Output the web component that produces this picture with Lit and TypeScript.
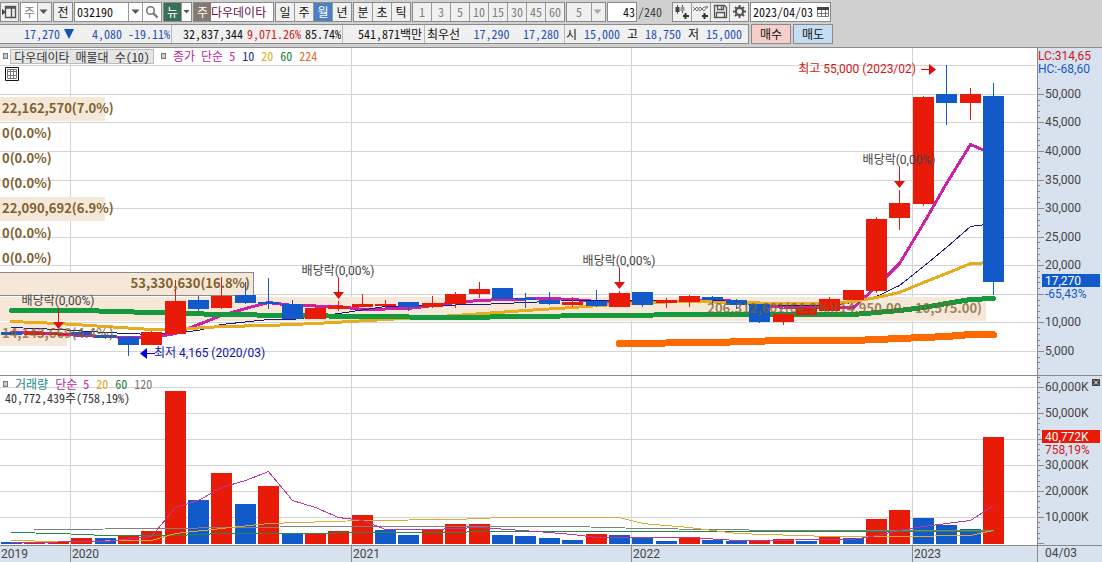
import { LitElement, html, svg, css } from "lit";
import { customElement, state } from "lit/decorators.js";
import { classMap } from "lit/directives/class-map.js";

const arrowDown = html`<svg class="arrow" width="9" height="6" viewBox="0 0 9 6" aria-hidden="true"><path d="M0.5 0.5h8l-4 4.5z" fill="currentColor" /></svg>`;

const fontRules = css`
  :host {
    font-family: "Noto Sans Mono CJK KR", "Noto Sans CJK KR", sans-serif;
    font-size: 12px;
    line-height: 16px;
  }
  button,
  input,
  select {
    font: inherit;
    color: inherit;
    margin: 0;
    padding: 0;
    border: 0;
    border-radius: 0;
    background: none;
    box-sizing: border-box;
    min-width: 0;
    outline-offset: -1px;
  }
`;

@customElement("trade-toolbar")
class TradeToolbar extends LitElement {
  @state() private period = "월";

  static styles = [
    fontRules,
    css`
      :host {
        display: flex;
        align-items: center;
        gap: 1px;
        height: 23px;
        background: #d0d0d0;
        color: #111;
        overflow: hidden;
        white-space: nowrap;
      }
      .box {
        display: flex;
        flex: none;
        box-sizing: border-box;
        height: 20px;
        border: 1px solid #8a8a8a;
        background: #f0f0f0;
      }
      .box > * {
        flex: none;
      }
      .white {
        background: #fff;
      }
      .gray {
        color: #808080;
      }
      .btn {
        width: 19px;
        height: 18px;
        line-height: 18px;
        display: grid;
        place-items: center;
        border-right: 1px solid #9a9a9a;
      }
      .btn:last-child {
        width: 18px;
        border-right: 0;
      }
      .btn.on {
        background: #4a80c4;
        color: #fff;
      }
      .tight .btn {
        width: 17px;
      }
      .btn.narrow {
        width: 14px;
      }
      .btn.slim {
        width: 9px;
      }
      .slim .arrow {
        width: 7px;
      }
      .arrow {
        color: #555;
      }
      .btn.green {
        width: 18px;
        background: #3a7058;
        color: #fff;
      }
      .brown {
        background: #85786f;
        color: #fff;
        width: 17px;
        text-align: center;
        line-height: 18px;
      }
      .name {
        width: 62px;
        color: #6a1048;
      }
      .code {
        width: 54px;
        padding-left: 2px;
        border-right: 1px solid #9a9a9a;
      }
      .count {
        width: 28px;
        text-align: right;
        padding-right: 1px;
      }
      .date {
        width: 65px;
        padding-left: 2px;
      }
      .total {
        flex: none;
        width: 32px;
        color: #444;
      }
      .pick {
        display: grid;
        grid-template-columns: 1fr 12px;
        align-items: center;
        width: 30px;
        background: #fff;
      }
      .pick select {
        grid-area: 1 / 1 / 2 / 3;
        appearance: none;
        height: 18px;
        padding-left: 3px;
      }
      .pick .arrow {
        grid-area: 1 / 2;
        pointer-events: none;
        z-index: 1;
      }
      .pick::after {
        content: "";
        grid-area: 1 / 2;
        height: 18px;
        margin-left: -2px;
        border-left: 1px solid #9a9a9a;
        background: #f0f0f0;
        pointer-events: none;
      }
      .pick.wide {
        width: 38px;
        grid-template-columns: 1fr 12px;
        background: #f0f0f0;
      }
      .wide select {
        padding-left: 9px;
      }
      .wide .arrow {
        color: #aaa;
      }
      .tools {
        margin-left: 1px;
      }
    `,
  ];

  private periods(items: string[]) {
    return html`<div class="box">
      ${items.map(
        (p) => html`<button
          class=${classMap({ btn: true, on: this.period === p })}
          aria-pressed=${this.period === p ? "true" : "false"}
          @click=${() => (this.period = p)}
        >${p}</button>`
      )}
    </div>`;
  }

  render() {
    return html`
      <div class="box tight">
        <button class="btn" aria-label="패널 열기">
          <svg width="15" height="14" viewBox="0 0 15 14"><path d="M0 4l4 3-4 3z" fill="#444" /><path d="M3.5 1.5h10v11h-10zM3 3h11M9.5 3v9.5" fill="none" stroke="#555" stroke-width="1.4" /></svg>
        </button>
      </div>
      <div class="box">
        <div class="pick">
          <select class="gray" aria-label="종목 구분"><option>주</option></select>
          ${arrowDown}
        </div>
      </div>
      <div class="box"><button class="btn">전</button></div>
      <div class="box white">
        <input class="code" aria-label="종목 코드" value="032190" />
        <button class="btn narrow" aria-label="종목 목록">${arrowDown}</button>
        <button class="btn" aria-label="종목 찾기">
          <svg width="14" height="14" viewBox="0 0 14 14"><circle cx="5.5" cy="5.5" r="3.8" fill="#fff" stroke="#777" stroke-width="1.6" /><path d="M8.5 8.5l4 4" stroke="#777" stroke-width="2.4" /></svg>
        </button>
      </div>
      <div class="box white">
        <button class="btn green">뉴</button>
        <button class="btn slim" aria-label="뉴스 메뉴">${arrowDown}</button>
      </div>
      <div class="box white">
        <span class="brown">주</span>
        <input class="name" aria-label="종목명" value="다우데이타" />
      </div>
      ${this.periods(["일", "주", "월", "년"])} ${this.periods(["분", "초", "틱"])}
      <div class="box gray">
        ${[1, 3, 5, 10, 15, 30, 45, 60].map((n) => html`<button class="btn">${n}</button>`)}
      </div>
      <div class="box gray">
        <div class="pick wide">
          <select aria-label="분 단위"><option>5</option></select>
          ${arrowDown}
        </div>
      </div>
      <div class="box white"><input class="count" aria-label="봉 개수" value="43" /></div>
      <span class="total">/240</span>
      <div class="box tools">
        <button class="btn" aria-label="차트 유형 추가">
          <svg width="16" height="16" viewBox="0 0 16 16"><path d="M3.5 1v9M8.5 1v8" stroke="#555" /><path d="M1.5 3h4v5h-4z" fill="#444" /><path d="M6.5 3h4v4h-4z" fill="#999" /><path d="M11.5 9v6M9 12h6" stroke="#333" stroke-width="2" /></svg>
        </button>
        <button class="btn" aria-label="지표 추가">
          <svg width="16" height="16" viewBox="0 0 16 16"><path d="M0 7l4-4 3 4 4-4 4 0M0 3l4 4 3-4 4 4 4-5" fill="none" stroke="#777" /><path d="M11.5 9v6M9 12h6" stroke="#333" stroke-width="2" /></svg>
        </button>
        <button class="btn" aria-label="저장">
          <svg width="15" height="15" viewBox="0 0 15 15"><path d="M1.5 1.5h10l2 2v10h-12zM4.5 1.5v4h6v-4M3.5 13.5v-5h8v5M8.5 2.5v2" fill="none" stroke="#555" stroke-width="1.3" /></svg>
        </button>
        <button class="btn" aria-label="설정">
          <svg width="15" height="15" viewBox="0 0 15 15"><circle cx="7.5" cy="7.5" r="3.6" fill="none" stroke="#555" stroke-width="2.2" /><path d="M7.5 1v2.500M7.500 11.500V14M1 7.500h2.500M11.500 7.500H14M3 3l1.500 1.500M10.500 10.500L12 12M12 3l-1.500 1.500M4.500 10.500L3 12" stroke="#555" stroke-width="2" /></svg>
        </button>
      </div>
      <div class="box white">
        <input class="date" aria-label="기준일" value="2023/04/03" />
        <button class="btn narrow" aria-label="달력">
          <svg width="12" height="12" viewBox="0 0 12 12"><path d="M0.5 1.5h11v9h-11zM0.5 7.5h11M4.5 4v6.5M8.5 4v6.5" fill="none" stroke="#777" /><path d="M0 1h12v3H0z" fill="#444" /></svg>
        </button>
      </div>
    `;
  }
}

@customElement("quote-bar")
class QuoteBar extends LitElement {
  static styles = [
    fontRules,
    css`
      :host {
        display: flex;
        align-items: center;
        gap: 2px;
        height: 24px;
        padding-bottom: 2px;
        box-sizing: border-box;
        background: #d0d0d0;
        color: #111;
        white-space: nowrap;
      }
      .quote {
        display: flex;
        flex: none;
        width: 749px;
        height: 20px;
        box-sizing: border-box;
        border: 1px solid #8a8a8a;
        border-left: 0;
        background: #f0f0f0;
        line-height: 18px;
      }
      .cell {
        display: flex;
        justify-content: flex-end;
        gap: 4px;
        padding-right: 1px;
        box-sizing: border-box;
        border-right: 1px solid #b8b8b8;
      }
      .last {
        justify-content: space-between;
        flex: 1;
        border: 0;
        padding: 0 6px 0 1px;
      }
      .change {
        width: 172px;
        gap: 6px;
      }
      .volume {
        width: 171px;
      }
      .value {
        width: 82px;
        padding-right: 2px;
      }
      .best {
        width: 140px;
        justify-content: space-between;
        padding: 0 5px 0 2px;
      }
      .down {
        color: #1c50b8;
      }
      .up {
        color: #cc2418;
      }
      .mark {
        align-self: center;
        margin: 0 12px 0 -2px;
      }
      .order {
        width: 40px;
        height: 20px;
        border: 1px solid #8a8a8a;
        line-height: 18px;
      }
      .buy {
        background: #f6cfcb;
      }
      .sell {
        background: #c5dcf2;
      }
    `,
  ];

  render() {
    return html`
      <div class="quote">
        <div class="cell change down">
          <span>17,270</span>
          <svg class="mark" width="10" height="10" viewBox="0 0 10 10" aria-label="하락"><path d="M0 0h10L5 10z" fill="#1450c0" /></svg>
          <span>4,080</span><span>-19.11%</span>
        </div>
        <div class="cell volume"><span>32,837,344</span><span class="up">9,071.26%</span><span>85.74%</span></div>
        <div class="cell value"><span>541,871백만</span></div>
        <div class="cell best"><span>최우선</span><span class="down">17,290</span><span class="down">17,280</span></div>
        <div class="cell last">
          <span>시</span><span class="down">15,000</span><span>고</span><span class="down">18,750</span><span>저</span><span class="down">15,000</span>
        </div>
      </div>
      <button class="order buy">매수</button>
      <button class="order sell">매도</button>
    `;
  }
}

/* One price unit is 175 won and takes one pixel of height. */
const WON_PER_UNIT = 175;
/* Each candle: direction, body top, body bottom, high, low, in price units. */
type Candle = [string, number, number, number, number];
const candles: Candle[] = [
  ["d", 48, 45, 48, 45], ["u", 48, 45, 48, 45], ["u", 47, 45, 48, 45], ["d", 48, 45, 49, 43],
  ["d", 45, 42, 46, 41], ["d", 43, 35, 44, 24], ["u", 48, 35, 49, 35], ["u", 79, 46, 100, 45],
  ["d", 80, 71, 84, 67], ["u", 84, 72, 103, 71], ["d", 85, 77, 98, 76], ["d", 78, 76, 102, 71],
  ["d", 76, 61, 80, 61], ["u", 72, 61, 76, 61], ["u", 74, 71, 79, 69], ["u", 76, 73, 86, 73],
  ["u", 76, 74, 80, 73], ["d", 78, 73, 78, 69], ["u", 77, 73, 84, 72], ["u", 86, 76, 88, 72],
  ["u", 91, 86, 98, 82], ["d", 92, 81, 92, 81], ["d", 82, 80, 87, 72], ["d", 80, 76, 88, 75],
  ["u", 78, 75, 83, 73], ["d", 79, 74, 90, 73], ["u", 87, 73, 89, 73], ["d", 88, 75, 88, 73],
  ["u", 80, 77, 82, 72], ["u", 84, 78, 85, 73], ["d", 83, 80, 84, 75], ["d", 80, 75, 81, 71],
  ["d", 76, 58, 76, 57], ["u", 66, 58, 66, 55], ["u", 72, 65, 72, 65], ["u", 81, 69, 83, 69],
  ["u", 90, 80, 90, 80], ["u", 161, 89, 163, 87], ["u", 177, 162, 190, 150], ["u", 283, 176, 284, 174],
  ["d", 286, 277, 315, 255], ["u", 286, 277, 292, 260], ["d", 284, 98, 297, 85],
];

/* Each volume bar: direction, height; 26 pixels stand for 10,000K shares. */
const volumes: [string, number][] = [
  ["d", 2], ["u", 1], ["u", 2], ["u", 6], ["d", 6], ["u", 8], ["u", 13], ["u", 153], ["d", 44], ["u", 71], ["d", 40],
  ["u", 58], ["d", 10], ["u", 10], ["u", 13], ["u", 29], ["d", 14], ["d", 9], ["u", 15], ["u", 20], ["u", 20],
  ["d", 9], ["d", 8], ["d", 6], ["d", 4], ["u", 10], ["d", 9], ["d", 6], ["d", 3], ["u", 7], ["d", 4], ["d", 3],
  ["u", 3], ["u", 5], ["d", 3], ["u", 7], ["d", 6], ["u", 25], ["u", 34], ["d", 26], ["d", 19], ["d", 15], ["u", 107],
];

type Series = { color: string; width: number; points: [number, number][] };
const priceAverages: Series[] = [
  { color: "#cc22a8", width: 3, points: [[0, 48], [1, 48], [3, 45], [5, 43], [6, 43], [7, 47], [8, 56], [9, 65], [10, 72], [11, 78], [12, 75], [14, 74], [15, 71], [17, 72], [18, 75], [19, 78], [20, 80], [21, 81], [23, 82], [24, 81], [25, 79], [26, 78], [29, 79], [30, 81], [31, 79], [32, 76], [33, 73], [34, 73], [36, 73], [37, 94], [38, 117], [39, 157], [40, 197], [41, 236], [42, 226]] },
  { color: "#1a1a80", width: 1, points: [[0, 53], [2, 51], [4, 48], [6, 46], [8, 50], [9, 56], [11, 61], [12, 61], [14, 67], [16, 74], [20, 76], [22, 78], [24, 80], [30, 80], [31, 79], [33, 75], [35, 75], [36, 78], [37, 84], [38, 95], [39, 114], [40, 133], [41, 154], [42, 157]] },
  { color: "#e6ac1e", width: 3, points: [[0, 59], [2, 57], [6, 51], [7, 51], [9, 54], [11, 55], [13, 57], [16, 61], [19, 65], [22, 70], [24, 73], [27, 78], [29, 79], [31, 78], [33, 77], [35, 77], [36, 79], [37, 83], [38, 88], [39, 98], [40, 107], [41, 117], [42, 118]] },
  { color: "#149a3c", width: 5, points: [[0, 70], [3, 70], [6, 68], [9, 66], [12, 65], [15, 64], [19, 63], [25, 65], [30, 66], [36, 66], [38, 70], [39, 73], [40, 77], [41, 81], [42, 82]] },
  { color: "#ff6a00", width: 7, points: [[26, 37], [30, 38], [33, 40], [36, 40], [38, 42], [40, 44], [41, 46], [42, 46]] },
];
const volumeAverages: Series[] = [
  { color: "#808080", width: 1, points: [[1, 15], [7, 16], [9, 17], [14, 18], [24, 18], [27, 16], [33, 14], [42, 14]] },
  { color: "#218a44", width: 1, points: [[0, 12], [2, 11], [4, 9], [7, 9], [9, 11], [19, 12], [20, 13], [34, 13], [36, 13], [42, 13]] },
  { color: "#dcaa30", width: 1, points: [[0, 4], [2, 3], [6, 4], [7, 11], [9, 16], [11, 21], [15, 24], [19, 25], [21, 27], [26, 27], [27, 21], [29, 17], [31, 11], [35, 8], [38, 8], [41, 9], [42, 14]] },
  { color: "#b838a0", width: 1, points: [[0, 2], [4, 3], [6, 8], [7, 37], [8, 44], [9, 57], [10, 64], [11, 73], [12, 44], [13, 37], [14, 27], [15, 24], [16, 15], [18, 15], [20, 17], [23, 12], [24, 10], [25, 7], [29, 7], [31, 4], [36, 5], [37, 9], [38, 14], [39, 18], [40, 21], [41, 24], [42, 39]] },
];

const profile = [
  { y: 49, width: 105, label: "22,162,570(7.0%)" },
  { y: 74, width: 0, label: "0(0.0%)" },
  { y: 99, width: 0, label: "0(0.0%)" },
  { y: 124, width: 0, label: "0(0.0%)" },
  { y: 149, width: 105, label: "22,090,692(6.9%)" },
  { y: 174, width: 0, label: "0(0.0%)" },
  { y: 199, width: 0, label: "0(0.0%)" },
  { y: 224, width: 253, label: "53,330,630(16.8%)" },
  { y: 249, width: 986, label: "206,312,601(64.9%)(14,950.00 ~ 10,575.00)" },
  { y: 274, width: 67, label: "14,143,669(4.4%)" },
];

const years: [number, string][] = [[3, "2020"], [15, "2021"], [27, "2022"], [39, "2023"]];
const exDividends: [number, number][] = [[2, 253], [14, 223], [26, 213], [38, 112]];

const PRICE_HEIGHT = 327;
const PRICE_BASE = 332;
const VOLUME_HEIGHT = 169;
const VOLUME_BASE = 168;

@customElement("stock-chart")
class StockChart extends LitElement {
  @state() private plotWidth = 1037;
  private observer?: ResizeObserver;

  static styles = [
    fontRules,
    css`
      :host {
        display: grid;
        grid-template-columns: minmax(0, 1fr) 65px;
        border-top: 1px solid #8a8a8a;
        background: #fff;
      }
      .pane {
        position: relative;
        border-bottom: 1px solid #8a8a8a;
        overflow: hidden;
      }
      svg {
        display: block;
      }
      .plot {
        width: 100%;
      }
      .axis,
      .dates {
        background: #d8e2ef;
      }
      .axis {
        position: relative;
        border-left: 1px solid #8a8a8a;
        border-bottom: 1px solid #8a8a8a;
      }
      .corner {
        box-sizing: border-box;
        background: #d8e2ef;
        border-left: 1px solid #8a8a8a;
        padding-left: 7px;
        line-height: 15px;
      }
      .corner,
      text {
        font-family: Roboto, "Noto Sans CJK KR", sans-serif;
        font-size: 12px;
        fill: #444;
        color: #444;
      }
      .crisp {
        shape-rendering: crispEdges;
      }
      .profile {
        font-family: "Noto Sans CJK KR", sans-serif;
        font-size: 13px;
        font-weight: bold;
        fill: #806030;
      }
      .faint {
        opacity: 0.75;
      }
      .high,
      .rise {
        fill: #d01818;
      }
      .low {
        fill: #1010b0;
      }
      .fall {
        fill: #1458c8;
      }
      .tag {
        fill: #fff;
      }
      .legend {
        position: absolute;
        top: 0;
        left: 3px;
        display: flex;
        align-items: center;
        height: 16px;
        gap: 7px;
        white-space: nowrap;
      }
      .set {
        display: flex;
        align-items: center;
        gap: 2px;
      }
      .set button {
        height: 15px;
        width: 144px;
        line-height: 13px;
        border: 1px solid #bbb;
        background: #e6e6e6;
        color: #333;
      }
      .dot {
        box-sizing: border-box;
        width: 5px;
        height: 6px;
        border: 1px solid #777;
        background: #ccc;
      }
      .amount {
        position: absolute;
        top: 14px;
        left: 5px;
        color: #333;
      }
      .magenta {
        color: #b828a0;
      }
      .navy {
        color: #1a3080;
      }
      .gold {
        color: #dcaa20;
      }
      .green {
        color: #188040;
      }
      .orange {
        color: #d87020;
      }
      .teal {
        color: #208888;
      }
      .dim {
        color: #777;
      }
      .table-button {
        position: absolute;
        top: 19px;
        left: 5px;
        width: 14px;
        height: 14px;
      }
      .close {
        position: absolute;
        top: 3px;
        right: 2px;
        width: 8px;
        height: 7px;
        background: #444;
      }
    `,
  ];

  firstUpdated() {
    const plot = this.renderRoot.querySelector(".pane") as HTMLElement;
    this.observer = new ResizeObserver(() => {
      this.plotWidth = plot.clientWidth;
    });
    this.observer.observe(plot);
  }

  disconnectedCallback() {
    super.disconnectedCallback();
    this.observer?.disconnect();
  }

  private get step() {
    return (this.plotWidth - 55) / 42;
  }

  private left(i: number) {
    return Math.round(1 + i * this.step);
  }

  private barWidth() {
    return Math.max(1, Math.round(this.step) - 2);
  }

  private middle(i: number) {
    return this.left(i) + Math.floor(this.barWidth() / 2);
  }

  private color(dir: string) {
    return dir === "u" ? "#e81a08" : "#1259c9";
  }

  private line(s: Series, base: number) {
    return svg`<polyline fill="none" stroke=${s.color} stroke-width=${s.width} stroke-linecap=${s.width > 1 ? "round" : "butt"}
      points=${s.points.map(([i, h]) => `${this.middle(i) + 0.5},${base - h + 0.5}`).join(" ")} />`;
  }

  private yearLines(height: number) {
    return years.map(([i]) => svg`<rect x=${this.left(i) - 1} y="0" width="1" height=${height} fill="#d4d4d4" />`);
  }

  private priceY(won: number) {
    return Math.floor(PRICE_BASE - won / WON_PER_UNIT);
  }

  private profileX(width: number) {
    if (width > 900) return this.plotWidth - 55;
    return width > 200 ? 250 : 2;
  }

  private pricePane() {
    const grid = [];
    for (let won = 5000; won <= 55000; won += 5000) grid.push(this.priceY(won));
    const w = this.barWidth();
    const wide = (width: number) => (width > 900 ? this.plotWidth - 51 : width);
    return html`<svg class="plot" height=${PRICE_HEIGHT} role="img" aria-label="월봉 차트">
      <g class="crisp">
        ${grid.map((y) => svg`<rect x="0" y=${y} width=${this.plotWidth - 1} height="1" fill="#d4d4d4" />`)}
        ${this.yearLines(PRICE_HEIGHT)}
        ${profile.map((p) => (p.width ? svg`<rect x="0" y=${p.y} width=${wide(p.width)} height="24" fill="#f6e8d8" />` : null))}
        <rect x="-0.5" y="224.5" width="254" height="23" fill="#f6e8d8" stroke="#8a8a8a" />
        ${priceAverages.map((s) => this.line(s, PRICE_BASE))}
        ${candles.map(
          ([dir, top, bottom, high, low], i) => svg`<g fill=${this.color(dir)}>
            <rect x=${this.middle(i)} y=${PRICE_BASE - high} width="1" height=${high - low} />
            <rect x=${this.left(i)} y=${PRICE_BASE - top} width=${w} height=${top - bottom} /></g>`
        )}
      </g>
      ${profile.map(
        (p) => svg`<text class="profile ${p.y > 240 ? "faint" : ""}" x=${this.profileX(p.width)} y=${p.y + 16}
          text-anchor=${p.width > 200 ? "end" : "start"}>${p.label}</text>`
      )}
      ${exDividends.map(([i, y]) => {
        const x = this.middle(i);
        return svg`<text x=${x} y=${y + 4} text-anchor="middle">배당락(0,00%)</text>
          <path d="M${x + 0.5} ${y + 7}v14" stroke="#e01010" /><path d="M${x - 5} ${y + 21}h11l-5.5 7z" fill="#e01010" />`;
      })}
      <text class="high" x=${this.middle(40) - 30} y="25" text-anchor="end">최고 55,000 (2023/02)</text>
      <path d="M${this.middle(40) - 25} 21.5h9" stroke="#f00000" /><path d="M${this.middle(40) - 17} 16v11l7-5.5z" fill="#f00000" />
      <path d="M${this.middle(5) + 19} 305.5h8" stroke="#0000e0" /><path d="M${this.middle(5) + 19} 300v11l-7-5.5z" fill="#0000e0" />
      <text class="low" x=${this.middle(5) + 26} y="309">최저 4,165 (2020/03)</text>
    </svg>`;
  }

  private volumePane() {
    const grid = [1, 2, 3, 4, 5, 6].map((n) => 167 - n * 26);
    return html`<svg class="plot" height=${VOLUME_HEIGHT} role="img" aria-label="거래량 차트">
      <g class="crisp">
        ${grid.map((y) => svg`<rect x="0" y=${y} width=${this.plotWidth - 1} height="1" fill="#d4d4d4" />`)}
        ${this.yearLines(VOLUME_HEIGHT)}
        ${volumes.map(([dir, h], i) => svg`<rect x=${this.left(i)} y=${VOLUME_BASE - h} width=${this.barWidth()} height=${h} fill=${this.color(dir)} />`)}
        ${volumeAverages.map((s) => this.line(s, VOLUME_BASE))}
      </g>
    </svg>`;
  }

  private priceAxis() {
    const ticks = [];
    for (let won = 2000; won <= 51000; won += 1000) ticks.push(won);
    const labels = [50000, 45000, 40000, 35000, 30000, 25000, 20000, 10000, 5000];
    return html`<svg width="64" height=${PRICE_HEIGHT} role="img" aria-label="가격 축">
      <g class="crisp">
        ${ticks.map((won) => svg`<rect x="0" y=${this.priceY(won)} width=${won % 5000 ? 2 : 6} height="1" fill="#8a8a8a" />`)}
        <rect x="4" y="226" width="58" height="13" fill="#1259c9" />
      </g>
      ${labels.map((won) => svg`<text x="7" y=${this.priceY(won) + 4}>${won.toLocaleString("en-US")}</text>`)}
      <text class="rise" x="0" y="12">LC:314,65</text>
      <text class="fall" x="0" y="25">HC:-68,60</text>
      <text class="tag" x="7" y="237">17,270</text>
      <text class="fall" x="7" y="250">-65,43%</text>
    </svg>`;
  }

  private volumeAxis() {
    const ticks = [];
    for (let n = 0; n <= 32; n++) ticks.push(n);
    return html`<svg width="64" height=${VOLUME_HEIGHT} role="img" aria-label="거래량 축">
      <g class="crisp">
        ${ticks.map((n) => svg`<rect x="0" y=${Math.round(167 - n * 5.2)} width=${n % 5 ? 2 : 6} height="1" fill="#8a8a8a" />`)}
        <rect x="4" y="54" width="58" height="13" fill="#e81a08" />
      </g>
      ${[1, 2, 3, 5, 6].map((n) => svg`<text x="7" y=${167 - n * 26 + 4}>${n}0,000K</text>`)}
      <text class="rise" x="7" y="78">758,19%</text>
      <text class="tag" x="7" y="65">40,772K</text>
    </svg>`;
  }

  render() {
    return html`
      <div class="pane">
        ${this.pricePane()}
        <div class="legend">
          <div class="set"><span class="dot"></span><button>다우데이타 매물대 수(10)</button></div>
          <span class="dot"></span>
          <span class="magenta">종가 단순 5</span><span class="navy">10</span><span class="gold">20</span><span class="green">60</span><span class="orange">224</span>
        </div>
        <button class="table-button" aria-label="표 보기">
          <svg width="14" height="14" viewBox="0 0 14 14"><path d="M0.5 0.5h13v13h-13z" fill="#fff" stroke="#111" /><path d="M2.5 2.5h9v9h-9zM2.5 4.5h9M2.5 8.5h9M5.5 2.5v9M8.5 2.5v9" fill="none" stroke="#777" /></svg>
        </button>
      </div>
      <div class="axis">${this.priceAxis()}</div>
      <div class="pane">
        ${this.volumePane()}
        <div class="legend">
          <span class="dot"></span>
          <span class="teal">거래량</span><span class="magenta">단순 5</span><span class="gold">20</span><span class="green">60</span><span class="dim">120</span>
        </div>
        <div class="amount">40,772,439주(758,19%)</div>
      </div>
      <div class="axis">
        ${this.volumeAxis()}
        <button class="close" aria-label="거래량 닫기">
          <svg width="8" height="7" viewBox="0 0 8 7"><path d="M2 1.5l4 4M6 1.5l-4 4" stroke="#fff" /></svg>
        </button>
      </div>
      <div class="dates">
        <svg class="plot" height="16" role="img" aria-label="날짜 축">
          <text x="1" y="12">2019</text>
          ${years.map(([i, y]) => svg`<rect x=${this.left(i) - 1} y="0" width="1" height="16" fill="#8a8a8a" /><text x=${this.left(i) + 1} y="12">${y}</text>`)}
        </svg>
      </div>
      <div class="corner">04/03</div>
    `;
  }
}

@customElement("app-root")
class AppRoot extends LitElement {
  static styles = css`
    :host {
      display: block;
    }
  `;

  render() {
    return html`<trade-toolbar></trade-toolbar><quote-bar></quote-bar><stock-chart></stock-chart>`;
  }
}
